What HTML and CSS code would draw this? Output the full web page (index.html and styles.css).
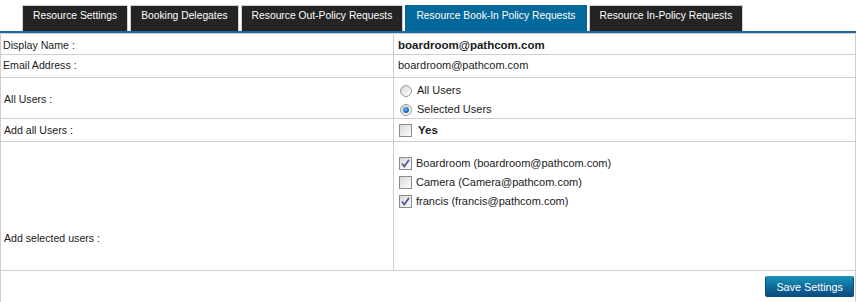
FILE: index.html
```html
<!DOCTYPE html>
<html>
<head>
<meta charset="utf-8">
<link rel="stylesheet" href="styles.css">
</head>
<body>
<div class="page">
  <nav class="tabs">
    <span class="tab">Resource Settings</span>
    <span class="tab">Booking Delegates</span>
    <span class="tab">Resource Out-Policy Requests</span>
    <span class="tab active">Resource Book-In Policy Requests</span>
    <span class="tab">Resource In-Policy Requests</span>
  </nav>
  <div class="rule"></div>
  <div class="form">
    <div class="cell label row-name">Display Name :</div>
    <div class="cell value row-name strong">boardroom@pathcom.com</div>

    <div class="cell label row-email">Email Address :</div>
    <div class="cell value row-email">boardroom@pathcom.com</div>

    <div class="cell label row-users">All Users :</div>
    <div class="cell value row-users">
      <div class="options radios">
        <label class="opt"><span class="radio"></span>All Users</label>
        <label class="opt"><span class="radio checked"></span>Selected Users</label>
      </div>
    </div>

    <div class="cell label row-all">Add all Users :</div>
    <div class="cell value row-all">
      <label class="opt yes"><span class="cb"></span><b>Yes</b></label>
    </div>

    <div class="cell label row-sel">Add selected users :</div>
    <div class="cell value row-sel">
      <div class="options checks">
        <label class="opt"><span class="cb"><svg width="11" height="11" viewBox="0 0 11 11"><polyline points="2,5.5 4.3,8.5 9,1.8" fill="none" stroke="#4a5a92" stroke-width="1.7"/></svg></span>Boardroom (boardroom@pathcom.com)</label>
        <label class="opt"><span class="cb"></span>Camera (Camera@pathcom.com)</label>
        <label class="opt"><span class="cb"><svg width="11" height="11" viewBox="0 0 11 11"><polyline points="2,5.5 4.3,8.5 9,1.8" fill="none" stroke="#4a5a92" stroke-width="1.7"/></svg></span>francis (francis@pathcom.com)</label>
      </div>
    </div>

    <div class="cell footer">
      <button class="save">Save Settings</button>
    </div>
  </div>
</div>
</body>
</html>
```
FILE: styles.css
```css
html, body {
  margin: 0;
  padding: 0;
  background: #fff;
}
body {
  font-family: "Liberation Sans", Arial, sans-serif;
  font-size: 11px;
  color: #1a1a1a;
}
.page {
  width: 856px;
}
.tabs {
  display: flex;
  gap: 2px;
  padding: 5px 0 0 22px;
  height: 26px;
}
.tab {
  box-sizing: border-box;
  height: 26px;
  padding: 3px 10px 0;
  line-height: 14px;
  font-size: 10.3px;
  background: #242424;
  color: #fff;
  border: 1px solid #d6d0d6;
  border-bottom: none;
  white-space: nowrap;
}
.tab.active {
  background: #05689b;
  border-color: #05689b;
}
.rule {
  height: 2px;
  background: #1a6c9c;
}
.form {
  box-sizing: border-box;
  width: 856px;
  display: grid;
  grid-template-columns: 393px 1fr;
  border: 1px solid #cfcfcf;
  border-bottom: none;
}
.cell {
  box-sizing: border-box;
  border-bottom: 1px solid #cfcfcf;
  display: flex;
  align-items: center;
}
.label {
  border-right: 1px solid #cfcfcf;
  padding-left: 2px;
  font-size: 10.6px;
}
.value {
  padding-left: 4px;
}
.strong {
  font-weight: bold;
  font-size: 11.5px;
}
.row-name { height: 21px; padding-top: 2px; }
.row-email { height: 23px; padding-bottom: 2px; }
.row-users { height: 41px; }
.row-users.label { padding-left: 3px; padding-top: 1px; }
.row-all { height: 23px; }
.row-all.label { padding-left: 3px; }
.row-sel { height: 129px; }
.row-sel.label {
  align-items: flex-end;
  padding-left: 3px;
  padding-bottom: 26px;
}
.row-sel.value {
  align-items: flex-start;
  padding-top: 15px;
}
.options {
  display: flex;
  flex-direction: column;
}
.radios {
  gap: 6px;
  padding-left: 2px;
  padding-top: 4px;
}
.checks {
  gap: 6px;
  padding-left: 1px;
}
.opt {
  display: flex;
  align-items: center;
  gap: 4px;
  height: 13px;
  line-height: 13px;
  white-space: nowrap;
}
.yes {
  padding-left: 1px;
  gap: 6px;
}
.yes b {
  font-size: 11.5px;
  padding-top: 1px;
}
.radio {
  box-sizing: border-box;
  width: 12px;
  height: 12px;
  border-radius: 50%;
  border: 1px solid #9a9a9a;
  background: linear-gradient(135deg, #d4d4d4 0%, #f0f0f0 60%, #ffffff 100%);
  display: flex;
  align-items: center;
  justify-content: center;
  margin-right: 1px;
}
.radio.checked::after {
  content: "";
  width: 6px;
  height: 6px;
  border-radius: 50%;
  background: radial-gradient(circle at 40% 35%, #6fb6ef 0%, #1f6fbf 55%, #0d3f7c 100%);
}
.cb {
  box-sizing: border-box;
  width: 13px;
  height: 13px;
  border: 1px solid #8c8c8c;
  background: linear-gradient(135deg, #d8d8d8 0%, #ececec 50%, #fafafa 100%);
  display: flex;
  align-items: center;
  justify-content: center;
}
.footer {
  grid-column: 1 / span 2;
  justify-content: flex-end;
  align-items: flex-start;
  padding: 5px 1px 10px 0;
  height: 40px;
  border-bottom: none;
}
.save {
  box-sizing: border-box;
  height: 21px;
  padding: 0 10px;
  font-family: "Liberation Sans", Arial, sans-serif;
  font-size: 10.8px;
  color: #fff;
  border: 1px solid #0a4f7e;
  border-top-color: #1b8fb5;
  border-radius: 2px;
  background: linear-gradient(#1a93b8 0%, #0d6d9c 50%, #0a4b7f 100%);
  cursor: pointer;
}
```
